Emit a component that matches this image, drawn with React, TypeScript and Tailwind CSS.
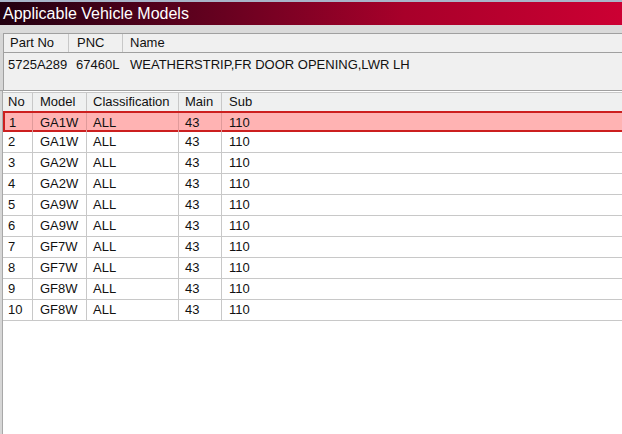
import React from 'react';

type Row = { no: number; model: string; cls: string; main: string; sub: string };

const rows: Row[] = [
  { no: 1, model: 'GA1W', cls: 'ALL', main: '43', sub: '110' },
  { no: 2, model: 'GA1W', cls: 'ALL', main: '43', sub: '110' },
  { no: 3, model: 'GA2W', cls: 'ALL', main: '43', sub: '110' },
  { no: 4, model: 'GA2W', cls: 'ALL', main: '43', sub: '110' },
  { no: 5, model: 'GA9W', cls: 'ALL', main: '43', sub: '110' },
  { no: 6, model: 'GA9W', cls: 'ALL', main: '43', sub: '110' },
  { no: 7, model: 'GF7W', cls: 'ALL', main: '43', sub: '110' },
  { no: 8, model: 'GF7W', cls: 'ALL', main: '43', sub: '110' },
  { no: 9, model: 'GF8W', cls: 'ALL', main: '43', sub: '110' },
  { no: 10, model: 'GF8W', cls: 'ALL', main: '43', sub: '110' },
];

// column widths for the model list
const cols = 'grid grid-cols-[30px_54px_92px_43px_1fr]';
const selCols = 'grid grid-cols-[28px_54px_92px_43px_1fr]';

export default function App() {
  return (
    <div className="flex h-[434px] w-[622px] flex-col overflow-hidden bg-[#d6d6d6] font-['Liberation_Sans',Arial,sans-serif] text-[13px] text-[#111]">
      <div className="h-[2px] bg-[#a9b5c9]" />
      <div className="flex h-[23px] items-center bg-gradient-to-r from-[#220010] via-[#a8002a] via-65% to-[#cc0033] pl-[3px] text-[16px] leading-none text-white">
        Applicable Vehicle Models
      </div>
      <div className="h-[8px] bg-[#dadada]" />

      {/* part info panel */}
      <div className="ml-[3px] h-[57px] border-t border-l border-[#a0a0a0] bg-[#f0f0f0]">
        <div className="flex h-[19px] items-center border-b border-[#a0a0a0]">
          <div className="w-[65px] border-r border-[#c8c8c8] pl-[6px] leading-[18px]">Part No</div>
          <div className="w-[54px] border-r border-[#c8c8c8] pl-[8px] leading-[18px]">PNC</div>
          <div className="pl-[7px] leading-[18px]">Name</div>
        </div>
        <div className="flex h-[24px] items-center">
          <div className="w-[65px] pl-[4px]">5725A289</div>
          <div className="w-[54px] pl-[7px]">67460L</div>
          <div className="pl-[7px]">WEATHERSTRIP,FR DOOR OPENING,LWR LH</div>
        </div>
      </div>

      {/* model list */}
      <div className="flex flex-1 border-t border-[#a0a0a0]">
        <div className="w-[3px] border-r border-[#a8a8a8] bg-[#d6d6d6]" />
        <div className="flex-1 bg-white pt-[1px]">
          <div className={`${cols} h-[19px] items-center border-t border-[#c8c8c8] bg-[#eff0f0]`}>
            <div className="border-r border-[#c8c8c8] pl-[5px] leading-[18px]">No</div>
            <div className="border-r border-[#c8c8c8] pl-[7px] leading-[18px]">Model</div>
            <div className="border-r border-[#c8c8c8] pl-[6px] leading-[18px]">Classification</div>
            <div className="border-r border-[#c8c8c8] pl-[6px] leading-[18px]">Main</div>
            <div className="pl-[7px] leading-[18px]">Sub</div>
          </div>
          {rows.map((r) =>
            r.no === 1 ? (
              <div key={r.no} className={`${selCols} h-[21px] border-y-2 border-l-2 border-[#cc1f1f] bg-[#ffb3b3]`}>
                <div className="flex items-center border-r border-[#e09a9a] pl-[4px]">{r.no}</div>
                <div className="flex items-center border-r border-[#e09a9a] pl-[7px]">{r.model}</div>
                <div className="flex items-center border-r border-[#e09a9a] pl-[6px]">{r.cls}</div>
                <div className="flex items-center border-r border-[#e09a9a] pl-[6px]">{r.main}</div>
                <div className="flex items-center pl-[7px]">{r.sub}</div>
              </div>
            ) : (
              <div key={r.no} className={`${cols} h-[21px] border-b border-[#c8c8c8]`}>
                <div className="flex items-center border-r border-[#c8c8c8] pl-[5px]">{r.no}</div>
                <div className="flex items-center border-r border-[#c8c8c8] pl-[7px]">{r.model}</div>
                <div className="flex items-center border-r border-[#c8c8c8] pl-[6px]">{r.cls}</div>
                <div className="flex items-center border-r border-[#c8c8c8] pl-[6px]">{r.main}</div>
                <div className="flex items-center pl-[7px]">{r.sub}</div>
              </div>
            )
          )}
        </div>
      </div>
    </div>
  );
}
